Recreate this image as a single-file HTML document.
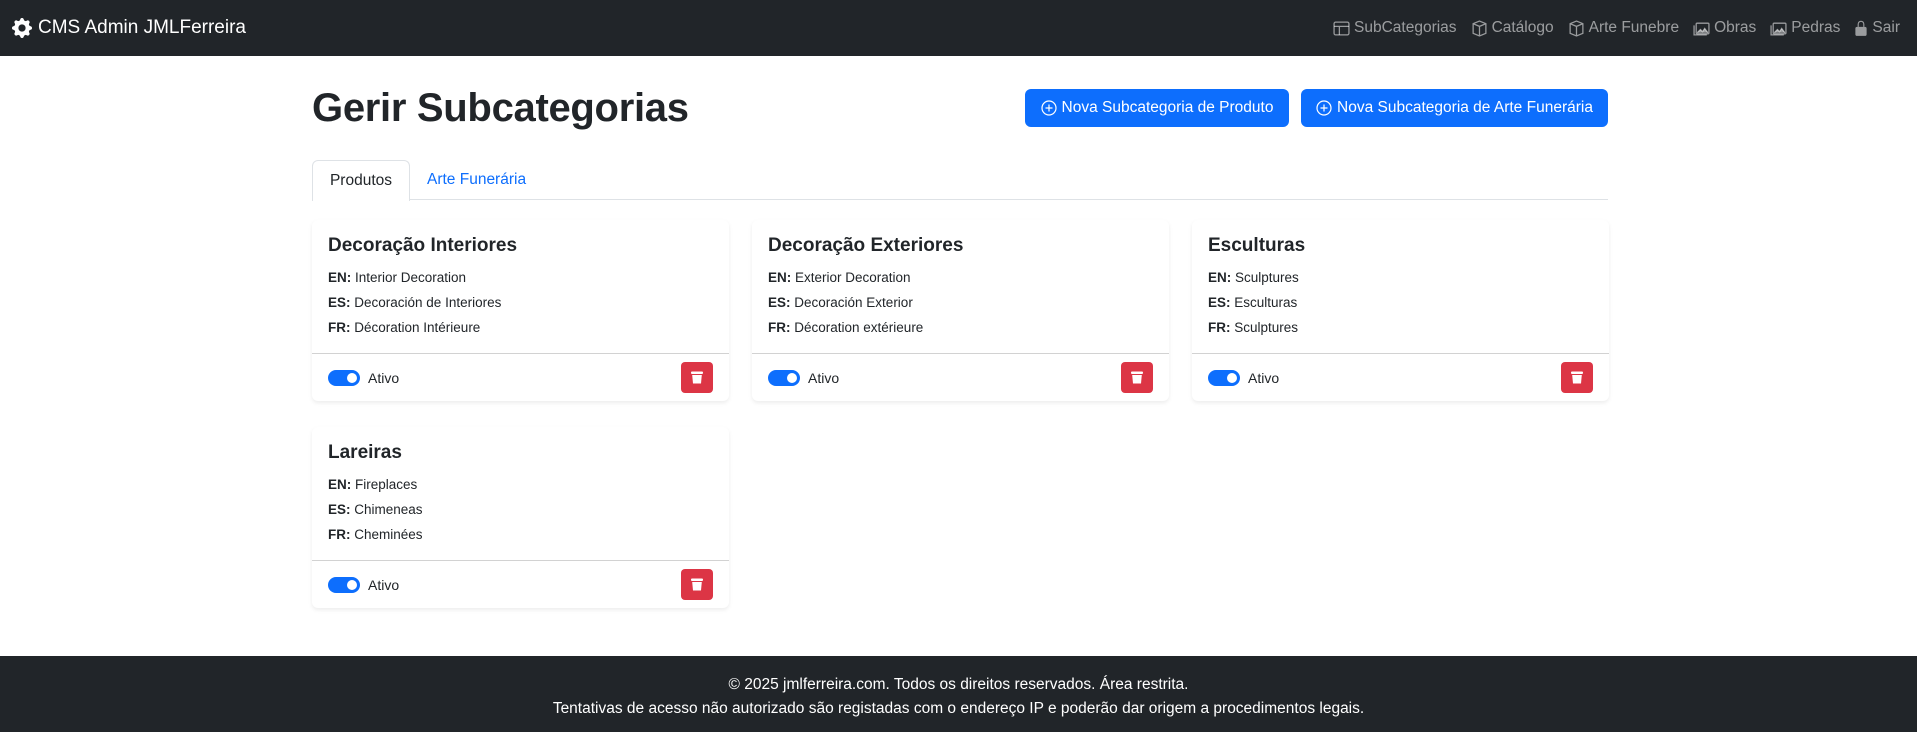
<!DOCTYPE html>
<html><head><meta charset="utf-8"><style>
*{box-sizing:border-box;margin:0;padding:0}
body{width:1917px;height:732px;font-family:"Liberation Sans",sans-serif;color:#212529;background:#fff;position:relative;overflow:hidden;font-size:16px}
.nav{position:absolute;left:0;top:0;width:1917px;height:56px;background:#212529}
.brand{position:absolute;left:12px;top:15px;color:#fff;font-size:19px;line-height:26px;display:flex;align-items:center;gap:6px}
.links{position:absolute;right:17px;top:17px;display:flex;gap:14px;color:rgba(255,255,255,.55);font-size:15.5px;line-height:22px}
.links span{display:flex;align-items:center;gap:4px}
h1{position:absolute;left:312px;top:84px;font-size:40px;font-weight:bold;line-height:48px;letter-spacing:-0.3px}
.btn{position:absolute;top:89px;height:38px;background:#0d6efd;color:#fff;border-radius:6px;font-size:15.5px;display:flex;align-items:center;justify-content:center;gap:5px}
.tabs{position:absolute;left:312px;top:199px;width:1296px;border-top:1px solid #dee2e6}
.tab1{position:absolute;left:312px;top:160px;width:98px;height:41px;border:1px solid #dee2e6;border-bottom:none;border-radius:6px 6px 0 0;background:#fff;font-size:15.5px;display:flex;align-items:center;justify-content:center}
.tab2{position:absolute;left:427px;top:171px;color:#0d6efd;font-size:15.5px}
.card{position:absolute;width:417px;height:181px;border-radius:6px;box-shadow:0 .125rem .25rem rgba(0,0,0,.075);background:#fff}
.card h5{position:absolute;left:16px;top:14px;font-size:19px;font-weight:bold;line-height:24px}
.card p{position:absolute;left:16px;font-size:13.5px;line-height:20px}
.card .f{position:absolute;left:0;top:133px;width:100%;height:48px;border-top:1px solid rgba(0,0,0,.175)}
.sw{position:absolute;left:16px;top:16px;width:32px;height:16px;border-radius:8px;background:#0d6efd}
.sw:after{content:"";position:absolute;right:3px;top:3px;width:10px;height:10px;border-radius:50%;background:#fff}
.at{position:absolute;left:56px;top:14px;font-size:14px;line-height:20px}
.del{position:absolute;right:16px;top:8px;width:32px;height:31px;background:#dc3545;border-radius:4px;display:flex;align-items:center;justify-content:center}
.foot{position:absolute;left:0;top:656px;width:1917px;height:76px;background:#212529;color:#fff;text-align:center;font-size:15.5px;line-height:24px;padding-top:17px}
</style></head><body>
<div class="nav">
<div class="brand"><svg width="20" height="20" viewBox="0 0 16 16" fill="#fff"><path d="M9.4 1.1c-.4-1.5-2.4-1.5-2.8 0l-.1.3a1.5 1.5 0 0 1-2.1.9l-.3-.2C2.7 1.4 1.4 2.7 2.1 4.1l.2.3a1.5 1.5 0 0 1-.9 2.1l-.3.1c-1.5.4-1.5 2.4 0 2.8l.3.1a1.5 1.5 0 0 1 .9 2.1l-.2.3c-.7 1.300.7 2.7 2 2l.3-.2a1.5 1.5 0 0 1 2.1.9l.1.3c.4 1.5 2.4 1.5 2.8 0l.1-.3a1.5 1.5 0 0 1 2.1-.9l.3.2c1.3.7 2.7-.7 2-2l-.2-.3a1.5 1.5 0 0 1 .9-2.1l.3-.1c1.5-.4 1.5-2.4 0-2.8l-.3-.1a1.5 1.5 0 0 1-.9-2.1l.2-.3c.7-1.3-.7-2.7-2-2l-.3.2a1.5 1.5 0 0 1-2.1-.9zM8 10.9a2.9 2.9 0 1 1 0-5.8 2.9 2.9 0 0 1 0 5.8"/></svg>CMS Admin JMLFerreira</div>
<div class="links">
<span><svg width="17" height="17" viewBox="0 0 16 16" fill="none" stroke="currentColor" stroke-width="1.2"><rect x="1" y="2" width="14" height="12" rx="1.5"/><path d="M1 6h14M6 6v8"/></svg>SubCategorias</span>
<span><svg width="17" height="17" viewBox="0 0 16 16" fill="none" stroke="currentColor" stroke-width="1.2"><path d="M8 1l6 2.5v9L8 15l-6-2.5v-9zM2 3.5L8 6l6-2.5M8 6v9"/></svg>Catálogo</span>
<span><svg width="17" height="17" viewBox="0 0 16 16" fill="none" stroke="currentColor" stroke-width="1.2"><path d="M8 1l6 2.5v9L8 15l-6-2.5v-9zM2 3.5L8 6l6-2.5M8 6v9"/></svg>Arte Funebre</span>
<span><svg width="17" height="17" viewBox="0 0 16 16" fill="none" stroke="currentColor" stroke-width="1.2"><rect x="3" y="3" width="12" height="10" rx="1"/><path d="M1 5v9h12"/><path d="M4 12l3-3 2 2 2-3 3 4" fill="currentColor"/></svg>Obras</span>
<span><svg width="17" height="17" viewBox="0 0 16 16" fill="none" stroke="currentColor" stroke-width="1.2"><rect x="3" y="3" width="12" height="10" rx="1"/><path d="M1 5v9h12"/><path d="M4 12l3-3 2 2 2-3 3 4" fill="currentColor"/></svg>Pedras</span>
<span><svg width="14" height="18" viewBox="0 0 12 16" fill="currentColor"><path d="M3 7V4.5a3 3 0 0 1 6 0V7H8V4.5a2 2 0 0 0-4 0V7z"/><rect x="1" y="7" width="10" height="8" rx="1.5"/></svg>Sair</span>
</div></div>
<h1>Gerir Subcategorias</h1>
<div class="btn" style="left:1025px;width:264px"><svg width="16" height="16" viewBox="0 0 16 16" fill="none" stroke="#fff" stroke-width="1.2"><circle cx="8" cy="8" r="7"/><path d="M8 4.5v7M4.5 8h7"/></svg>Nova Subcategoria de Produto</div>
<div class="btn" style="left:1301px;width:307px"><svg width="16" height="16" viewBox="0 0 16 16" fill="none" stroke="#fff" stroke-width="1.2"><circle cx="8" cy="8" r="7"/><path d="M8 4.5v7M4.5 8h7"/></svg>Nova Subcategoria de Arte Funerária</div>
<div class="tabs"></div>
<div class="tab1">Produtos</div>
<div class="tab2">Arte Funerária</div>

<div class="card" style="left:312px;top:220px"><h5>Decoração Interiores</h5>
<p style="top:48px"><b>EN:</b> Interior Decoration</p><p style="top:73px"><b>ES:</b> Decoración de Interiores</p><p style="top:98px"><b>FR:</b> Décoration Intérieure</p>
<div class="f"><div class="sw"></div><div class="at">Ativo</div><div class="del"><svg width="12" height="13" viewBox="0 0 12 13" fill="#fff"><rect x="0" y="0.5" width="12" height="2.5" rx="1"/><path d="M1.2 4h9.6l-.8 8.5H2z"/></svg></div></div></div>
<div class="card" style="left:752px;top:220px"><h5>Decoração Exteriores</h5>
<p style="top:48px"><b>EN:</b> Exterior Decoration</p><p style="top:73px"><b>ES:</b> Decoración Exterior</p><p style="top:98px"><b>FR:</b> Décoration extérieure</p>
<div class="f"><div class="sw"></div><div class="at">Ativo</div><div class="del"><svg width="12" height="13" viewBox="0 0 12 13" fill="#fff"><rect x="0" y="0.5" width="12" height="2.5" rx="1"/><path d="M1.2 4h9.6l-.8 8.5H2z"/></svg></div></div></div>
<div class="card" style="left:1192px;top:220px"><h5>Esculturas</h5>
<p style="top:48px"><b>EN:</b> Sculptures</p><p style="top:73px"><b>ES:</b> Esculturas</p><p style="top:98px"><b>FR:</b> Sculptures</p>
<div class="f"><div class="sw"></div><div class="at">Ativo</div><div class="del"><svg width="12" height="13" viewBox="0 0 12 13" fill="#fff"><rect x="0" y="0.5" width="12" height="2.5" rx="1"/><path d="M1.2 4h9.6l-.8 8.5H2z"/></svg></div></div></div>
<div class="card" style="left:312px;top:427px"><h5>Lareiras</h5>
<p style="top:48px"><b>EN:</b> Fireplaces</p><p style="top:73px"><b>ES:</b> Chimeneas</p><p style="top:98px"><b>FR:</b> Cheminées</p>
<div class="f"><div class="sw"></div><div class="at">Ativo</div><div class="del"><svg width="12" height="13" viewBox="0 0 12 13" fill="#fff"><rect x="0" y="0.5" width="12" height="2.5" rx="1"/><path d="M1.2 4h9.6l-.8 8.5H2z"/></svg></div></div></div>

<div class="foot">© 2025 jmlferreira.com. Todos os direitos reservados. Área restrita.<br>Tentativas de acesso não autorizado são registadas com o endereço IP e poderão dar origem a procedimentos legais.</div>
</body></html>
